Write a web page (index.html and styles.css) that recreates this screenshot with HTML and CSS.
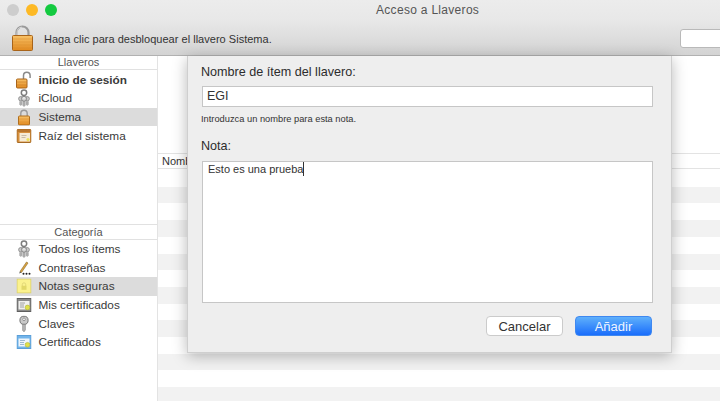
FILE: index.html
```html
<!DOCTYPE html>
<html lang="es">
<head>
<meta charset="utf-8">
<title>Acceso a Llaveros</title>
<link rel="stylesheet" href="styles.css">
</head>
<body>
<svg class="defs" width="0" height="0" aria-hidden="true">
  <defs>
    <linearGradient id="gold" x1="0" y1="0" x2="0" y2="1">
      <stop offset="0" stop-color="#f8c268"/><stop offset="1" stop-color="#e28a1f"/>
    </linearGradient>
    <symbol id="keys" viewBox="0 0 12 18">
      <path d="M1.800 12.200v3.300l1 1 1-1v-3.300" fill="#b5b5b5" stroke="#8a8a8a" stroke-width=".6"/>
      <circle cx="2.800" cy="9.700" r="2.200" fill="#c9c9c9" stroke="#858585" stroke-width=".8"/>
      <path d="M8.200 12.200v3.300l1 1 1-1v-3.300" fill="#b5b5b5" stroke="#8a8a8a" stroke-width=".6"/>
      <circle cx="9.200" cy="9.700" r="2.200" fill="#c9c9c9" stroke="#858585" stroke-width=".8"/>
      <path d="M5 12v4.500l1 1 1-1V12" fill="#bdbdbd" stroke="#808080" stroke-width=".6"/>
      <circle cx="6" cy="9.700" r="2.500" fill="#d4d4d4" stroke="#777" stroke-width=".8"/>
      <circle cx="6" cy="9" r=".7" fill="#fff"/>
      <circle cx="6" cy="3.700" r="2.700" fill="none" stroke="#7d7d7d" stroke-width="1.500"/>
      <path d="M6 6.200v1.500" stroke="#7d7d7d" stroke-width="1.200"/>
    </symbol>
    <symbol id="cert" viewBox="0 0 15 14">
      <rect x=".5" y=".5" width="14" height="13" fill="#8a8a8a" stroke="#5f5f5f"/>
      <rect x="2" y="3" width="11" height="8.500" fill="#f0f0ee"/>
      <path d="M3.500 5h5M3.500 7h4M3.500 9h4" stroke="#8d8d8d" stroke-width=".8"/>
      <circle cx="11" cy="9.500" r="2.400" fill="#dfe04a" stroke="#a7a82a" stroke-width=".5"/>
    </symbol>
    <symbol id="cert-blue" viewBox="0 0 15 14">
      <rect x=".5" y=".5" width="14" height="13" fill="#72b4ea" stroke="#5b9fd8"/>
      <rect x="2" y="3.500" width="11" height="8" fill="#eef5fb"/>
      <path d="M3.500 5.500h5M3.500 7.500h4M3.500 9.500h4" stroke="#86a9c8" stroke-width=".8"/>
      <circle cx="11" cy="9.800" r="2.400" fill="#dfe04a" stroke="#a7a82a" stroke-width=".5"/>
    </symbol>
  </defs>
</svg>
<div class="window">
  <header class="header">
    <div class="titlebar">
      <div class="lights">
        <span class="light light-grey"></span>
        <span class="light light-yellow"></span>
        <span class="light light-green"></span>
      </div>
      <span class="title">Acceso a Llaveros</span>
    </div>
    <div class="toolbar">
      <svg class="big-lock" viewBox="0 0 21 26" width="21" height="26">
        <path d="M4.500 12V7.500a6 6 0 0 1 12 0V12" fill="none" stroke="#9a9a9a" stroke-width="2.200"/>
        <path d="M5 11V7.500a5.500 5.500 0 0 1 5-5.400" fill="none" stroke="#e4e4e4" stroke-width=".8"/>
        <rect x=".5" y="10.500" width="20" height="15" rx="1" fill="url(#gold)" stroke="#a8641a"/>
        <path d="M1 14h19M1 17h19M1 20h19M1 23h19" stroke="#d98d2d" stroke-width=".6" opacity=".7"/>
      </svg>
      <span class="unlock-text">Haga clic para desbloquear el llavero Sistema.</span>
      <div class="search"></div>
    </div>
  </header>
  <div class="content">
    <aside class="sidebar">
      <section class="group group-keychains">
        <h2 class="group-title group-title-first">Llaveros</h2>
        <ul class="list">
          <li class="row row-bold">
            <svg class="icon" viewBox="0 0 16 18" width="16" height="18">
              <path d="M7.500 8V4.500a3.300 3.300 0 0 1 6.600 0V7" fill="none" stroke="#8a8a8a" stroke-width="1.500"/>
              <rect x=".5" y="8" width="10.500" height="9" rx="1" fill="url(#gold)" stroke="#a8641a"/>
              <path d="M1 11h9.500M1 14h9.500" stroke="#c77a22" stroke-width=".6"/>
            </svg>
            <span>inicio de sesión</span>
          </li>
          <li class="row">
            <svg class="icon" width="12" height="18"><use href="#keys"/></svg>
            <span>iCloud</span>
          </li>
          <li class="row row-selected">
            <svg class="icon" viewBox="0 0 12 17" width="12" height="17">
              <path d="M2.800 8V5a3.200 3.200 0 0 1 6.400 0v3" fill="none" stroke="#9a9a9a" stroke-width="1.400"/>
              <rect x=".5" y="7.500" width="11" height="9" rx="1" fill="url(#gold)" stroke="#b06e1d"/>
              <path d="M1 10.500h10M1 13.500h10" stroke="#d98d2d" stroke-width=".5"/>
            </svg>
            <span>Sistema</span>
          </li>
          <li class="row">
            <svg class="icon" viewBox="0 0 15 14" width="15" height="14">
              <rect x=".5" y=".5" width="14" height="13" rx="1" fill="#d8913e" stroke="#a56a25"/>
              <rect x=".5" y=".5" width="14" height="2.500" fill="#b9772e"/>
              <rect x="3" y="4" width="10.500" height="8.500" fill="#f6ecd6"/>
              <path d="M5 6.500h5M5 8.500h4" stroke="#bcb09a" stroke-width=".8"/>
              <circle cx="11.500" cy="10.500" r="1.600" fill="#ece25a"/>
            </svg>
            <span>Raíz del sistema</span>
          </li>
        </ul>
      </section>
      <section class="group">
        <h2 class="group-title">Categoría</h2>
        <ul class="list">
          <li class="row">
            <svg class="icon" width="12" height="18"><use href="#keys"/></svg>
            <span>Todos los ítems</span>
          </li>
          <li class="row">
            <svg class="icon" viewBox="0 0 14 15" width="14" height="15">
              <path d="M3 11 9.500 1.500l1.500 1L4.500 12z" fill="#d9a441" stroke="#8c6a2b" stroke-width=".6"/>
              <path d="M3 11l-.8 2 1.900-1z" fill="#333"/>
              <circle cx="6.500" cy="13.300" r="1" fill="#222"/>
              <circle cx="9.500" cy="13.300" r="1" fill="#222"/>
              <circle cx="12.500" cy="13.300" r="1" fill="#222"/>
            </svg>
            <span>Contraseñas</span>
          </li>
          <li class="row row-selected">
            <svg class="icon" viewBox="0 0 15 15" width="15" height="15">
              <rect x=".5" y=".5" width="14" height="14" fill="#fbf28e" stroke="#d9cf6c"/>
              <path d="M5.800 7.500V6a1.700 1.700 0 0 1 3.400 0v1.500" fill="none" stroke="#dcd273" stroke-width=".8"/>
              <rect x="5" y="7.300" width="5" height="4" fill="#e2d869"/>
            </svg>
            <span>Notas seguras</span>
          </li>
          <li class="row">
            <svg class="icon" width="15" height="14"><use href="#cert"/></svg>
            <span>Mis certificados</span>
          </li>
          <li class="row">
            <svg class="icon" viewBox="0 0 10 17" width="10" height="17">
              <circle cx="5" cy="4.800" r="4.100" fill="#c9c9c9" stroke="#767676"/>
              <circle cx="5" cy="3.800" r="1.300" fill="#fff" stroke="#666" stroke-width=".6"/>
              <path d="M3.700 8.800h2.600v5.700L5 16.300l-1.300-1.500z" fill="#b9b9b9" stroke="#777" stroke-width=".6"/>
            </svg>
            <span>Claves</span>
          </li>
          <li class="row">
            <svg class="icon" width="15" height="14"><use href="#cert-blue"/></svg>
            <span>Certificados</span>
          </li>
        </ul>
      </section>
    </aside>
    <main class="main">
      <div class="column-head">Nombre</div>
      <div class="zebra"></div>
    </main>
  </div>
  <form class="dialog">
    <label class="field-label">Nombre de ítem del llavero:</label>
    <div class="input">EGI</div>
    <p class="hint">Introduzca un nombre para esta nota.</p>
    <label class="field-label field-label-note">Nota:</label>
    <div class="textarea">Esto es una prueba<span class="caret"></span></div>
    <div class="actions">
      <button type="button" class="btn">Cancelar</button>
      <button type="button" class="btn btn-primary">Añadir</button>
    </div>
  </form>
</div>
</body>
</html>
```
FILE: styles.css
```css
* { box-sizing: border-box; }
html, body { margin: 0; height: 100%; }
body {
  overflow: hidden;
  font-family: "Liberation Sans", Arial, sans-serif;
  color: #333;
  background: #fff;
}
.defs { position: absolute; }
.window {
  position: relative;
  width: 720px;
  height: 401px;
  overflow: hidden;
  display: flex;
  flex-direction: column;
}

/* Header */
.header {
  height: 56px;
  flex: none;
  background: linear-gradient(#ececec 0, #e8e8e8 20px, #d3d3d3 100%);
  border-bottom: 1px solid #b1b1b1;
}
.titlebar {
  height: 19px;
  display: flex;
  align-items: center;
  padding-left: 7px;
}
.lights { display: flex; gap: 7px; width: 369px; }
.light { width: 12px; height: 12px; border-radius: 50%; }
.light-grey { background: #cdcdcd; }
.light-yellow { background: #fdb925; }
.light-green { background: #14ca40; }
.title { font-size: 12px; color: #555; letter-spacing: .3px; }
.toolbar {
  height: 36px;
  display: flex;
  align-items: center;
  padding-left: 12px;
  position: relative;
}
.big-lock { flex: none; margin-top: 2px; }
.unlock-text { margin-left: 11px; margin-top: 4px; font-size: 11px; letter-spacing: .02px; color: #333; white-space: nowrap; }
.search {
  position: absolute;
  left: 680px;
  top: 10px;
  width: 80px;
  height: 19px;
  background: #fff;
  border: 1px solid #b9b9b9;
  border-radius: 3px;
}

/* Body */
.content { flex: 1; display: flex; min-height: 0; }
.sidebar {
  width: 158px;
  flex: none;
  background: #fff;
  border-right: 1px solid #e3e3e3;
  display: flex;
  flex-direction: column;
}
.group-keychains { height: 168px; }
.group-title {
  margin: 0;
  height: 16px;
  font-size: 11px;
  font-weight: normal;
  line-height: 14px;
  text-align: center;
  color: #555;
  border-top: 1px solid #e1e1e1;
  border-bottom: 1px solid #e1e1e1;
}
.group-title-first { height: 14px; line-height: 12px; border-top: 0; }
.list { list-style: none; margin: 0; padding: .5px 0 0; }
.group:not(.group-keychains) .list { padding-top: 0; }
.row {
  height: 18.600px;
  display: flex;
  align-items: center;
  font-size: 11.800px;
  color: #3a3a3a;
  white-space: nowrap;
  position: relative;
  padding-left: 38.500px;
}
.row-bold { font-weight: bold; }
.row-selected { background: #dcdcdc; }
.icon { position: absolute; left: 24px; top: 50%; transform: translate(-50%, -50%); }

/* Table */
.main { flex: 1; min-width: 0; padding-top: 97px; display: flex; flex-direction: column; }
.column-head {
  height: 16px;
  flex: none;
  padding-left: 4px;
  font-size: 11px;
  line-height: 14px;
  color: #333;
  border-top: 1px solid #e3e3e3;
  border-bottom: 1px solid #e3e3e3;
}
.zebra {
  flex: 1;
  margin-top: 1px;
  background: repeating-linear-gradient(#fff 0, #fff 16.700px, #f2f2f2 16.700px, #f2f2f2 33.400px);
}

/* Dialog sheet */
.dialog {
  position: absolute;
  left: 187px;
  top: 56px;
  width: 485px;
  height: 297px;
  background: #eeeeee;
  border: 1px solid #cfcfcf;
  border-top: 0;
  box-shadow: 0 3px 14px rgba(0, 0, 0, .28);
  padding: 9px 18px 0 14px;
  display: flex;
  flex-direction: column;
}
.field-label { display: block; margin-left: -1px; font-size: 12.600px; line-height: 15px; color: #2c2c2c; }
.field-label-note { margin-top: 14px; }
.input {
  margin: 6px 0 0;
  height: 21px;
  background: #fff;
  border: 1px solid #c6c6c6;
  padding-left: 4px;
  font-size: 12.500px;
  line-height: 19px;
  color: #333;
}
.hint { margin: 6px 0 0 -1px; font-size: 9.300px; line-height: 12px; color: #333; }
.textarea {
  margin-top: 7px;
  height: 142px;
  background: #fff;
  border: 1px solid #c6c6c6;
  padding: 0 0 0 5px;
  font-size: 11px;
  line-height: 14px;
  color: #333;
}
.caret { display: inline-block; width: 1px; height: 14px; background: #333; vertical-align: top; }
.actions { display: flex; justify-content: flex-end; gap: 12px; margin-top: 13px; padding-right: 1px; }
.btn {
  width: 77px;
  height: 20px;
  padding: 0;
  font: 13px "Liberation Sans", Arial, sans-serif;
  color: #333;
  background: #fff;
  border: 1px solid #cbcbcb;
  border-radius: 4px;
}
.btn-primary {
  color: #eef4ff;
  background: linear-gradient(#5fb0fb, #1a6dfb);
  border-color: #3f88f0;
}
```
